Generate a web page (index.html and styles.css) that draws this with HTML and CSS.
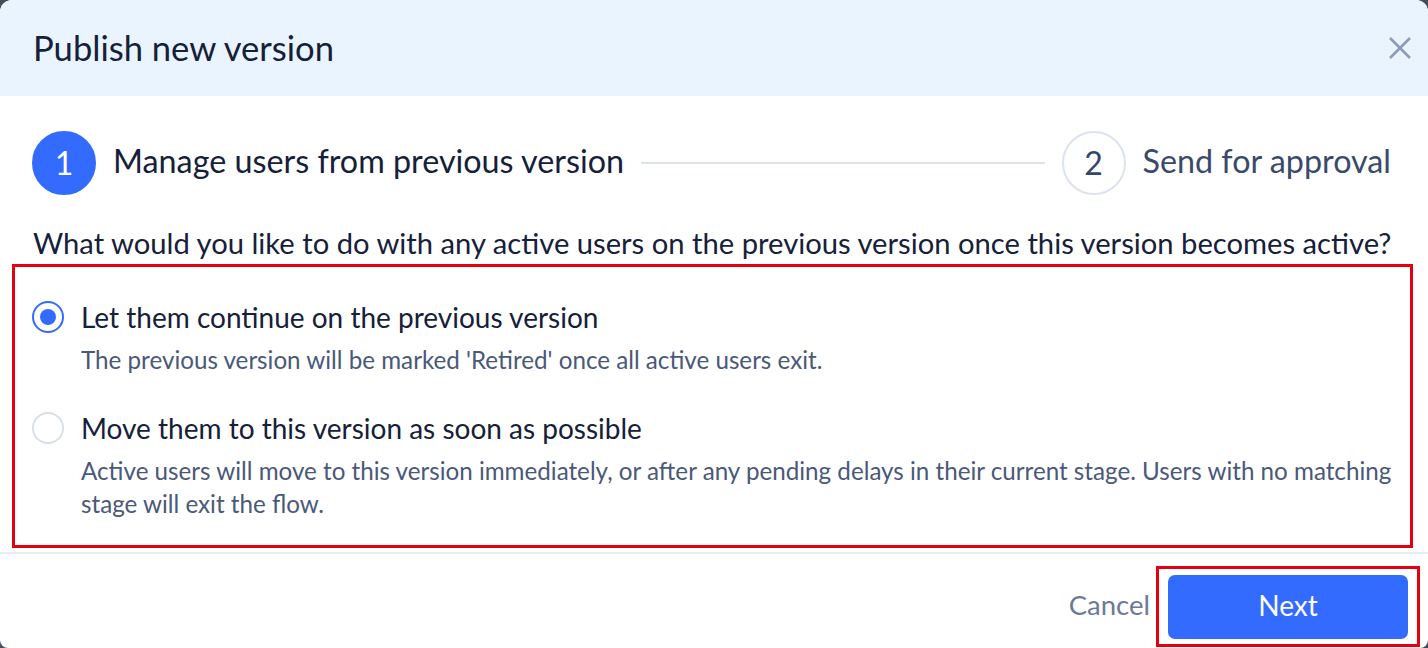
FILE: index.html
```html
<!DOCTYPE html>
<html lang="en">
<head>
<meta charset="utf-8">
<title>Publish new version</title>
<link rel="stylesheet" href="styles.css">
</head>
<body>
<div class="dialog">
  <div class="header">
    <h1 class="title">Publish new version</h1>
    <button class="close" aria-label="Close">
      <svg width="22" height="22" viewBox="0 0 22 22"><path d="M1 1 L21 21 M21 1 L1 21" stroke="#8a9dbd" stroke-width="2.6" stroke-linecap="butt" fill="none"/></svg>
    </button>
  </div>
  <div class="body">
    <div class="stepper">
      <div class="step-num active">1</div>
      <div class="step-label active">Manage users from previous version</div>
      <div class="step-line"></div>
      <div class="step-num">2</div>
      <div class="step-label">Send for approval</div>
    </div>
    <p class="question">What would you like to do with any active users on the previous version once this version becomes active?</p>
    <div class="options">
      <div class="option">
        <span class="radio checked"></span>
        <div class="option-text">
          <div class="option-label">Let them continue on the previous version</div>
          <div class="option-desc">The previous version will be marked 'Retired' once all active users exit.</div>
        </div>
      </div>
      <div class="option">
        <span class="radio"></span>
        <div class="option-text">
          <div class="option-label">Move them to this version as soon as possible</div>
          <div class="option-desc">Active users will move to this version immediately, or after any pending delays in their current stage. Users with no matching stage will exit the flow.</div>
        </div>
      </div>
    </div>
  </div>
  <div class="footer">
    <button class="cancel">Cancel</button>
    <div class="highlight">
      <button class="next">Next</button>
    </div>
  </div>
</div>
</body>
</html>
```
FILE: styles.css
```css
* { box-sizing: border-box; }
html, body { margin: 0; padding: 0; }
body {
  background: #474c59;
  font-family: "Lato", "Inter", sans-serif;
  width: 1428px;
  height: 648px;
  overflow: hidden;
}
.dialog {
  width: 1428px;
  height: 648px;
  background: #ffffff;
  border-radius: 12px 12px 8px 8px;
  overflow: hidden;
  display: flex;
  flex-direction: column;
}
.header {
  height: 96px;
  flex: none;
  background: #eaf4ff;
  display: flex;
  align-items: center;
  justify-content: space-between;
  padding: 0 17px 0 33px;
}
.title {
  margin: 0;
  font-size: 34.6px;
  font-weight: 400;
  color: #15203a;
  line-height: 40px;
}
.close {
  border: 0;
  background: none;
  padding: 0;
  width: 22px;
  height: 22px;
  display: flex;
}
.body {
  flex: 1;
  padding-top: 35px;
}
.stepper {
  display: flex;
  align-items: center;
  gap: 17px;
  padding: 0 37px 0 32px;
  height: 64px;
}
.step-num {
  width: 64px;
  height: 64px;
  border-radius: 50%;
  flex: none;
  display: flex;
  align-items: center;
  justify-content: center;
  font-size: 32px;
  padding-bottom: 2px;
  color: #34466a;
  border: 2px solid #dce2ee;
}
.step-num.active {
  background: #336bff;
  border-color: #336bff;
  color: #ffffff;
}
.step-label {
  font-size: 32.3px;
  color: #3a4a6a;
  white-space: nowrap;
  padding-bottom: 6px;
}
.step-label.active { color: #16203a; }
.step-line {
  flex: 1;
  height: 2px;
  background: #dbe1ee;
}
.question {
  margin: 31px 0 0 33px;
  font-size: 29.2px;
  line-height: 34px;
  color: #16203a;
  white-space: nowrap;
}
.options {
  margin: 4px 15px 0 12px;
  border: 3px solid #e3000f;
  padding: 33px 4px 25px 17px;
  display: flex;
  flex-direction: column;
  gap: 35px;
}
.option {
  display: flex;
  gap: 17px;
  align-items: flex-start;
}
.radio {
  width: 32px;
  height: 32px;
  flex: none;
  border-radius: 50%;
  border: 2px solid #d8deeb;
  margin-top: 1px;
  display: flex;
  align-items: center;
  justify-content: center;
}
.radio.checked { border-color: #336bff; }
.radio.checked::after {
  content: "";
  width: 16px;
  height: 16px;
  border-radius: 50%;
  background: #336bff;
}
.option-label {
  font-size: 28px;
  line-height: 34px;
  color: #16203a;
}
.option-desc {
  margin-top: 9px;
  font-size: 24.2px;
  line-height: 33px;
  color: #4a5879;
}
.footer {
  flex: none;
  height: 96px;
  border-top: 2px solid #e6edf7;
  display: flex;
  justify-content: flex-end;
  align-items: flex-start;
  padding: 12px 8px 0 0;
  gap: 6px;
}
.cancel {
  border: 0;
  background: none;
  font-family: inherit;
  font-size: 27.5px;
  color: #6c7a98;
  padding: 0 0 4px 0;
  height: 81px;
}
.highlight {
  border: 3px solid #e3000f;
  padding: 6px 9px 5px 9px;
}
.next {
  width: 240px;
  height: 64px;
  border: 0;
  border-radius: 7px;
  background: #336bff;
  color: #ffffff;
  font-family: inherit;
  font-size: 28px;
  padding: 0 0 4px 0;
}
```
